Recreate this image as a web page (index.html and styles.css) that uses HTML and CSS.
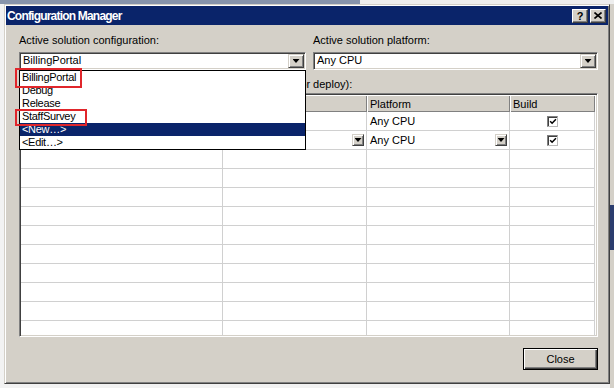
FILE: index.html
```html
<!DOCTYPE html>
<html lang="en">
<head>
<meta charset="utf-8">
<title>Configuration Manager</title>
<link rel="stylesheet" href="styles.css">
</head>
<body>
<div class="window">
  <div class="titlebar">
    <span class="title">Configuration Manager</span>
    <div class="tbtns">
      <span class="tbtn help">?</span>
      <span class="tbtn">
        <svg width="8" height="7" viewBox="0 0 8 7"><path d="M0.5 0.5 L7.5 6.5 M7.5 0.5 L0.5 6.5" stroke="#000" stroke-width="1.6" fill="none"/></svg>
      </span>
    </div>
  </div>
  <div class="client">
    <div class="selectors">
      <div class="sel">
        <div class="label">Active solution configuration:</div>
        <div class="combo-wrap">
          <div class="combo">
            <span class="value">BillingPortal</span>
            <span class="arrow-btn"><i class="tri"></i></span>
          </div>
          <ul class="dropdown">
            <li>BillingPortal</li>
            <li>Debug</li>
            <li>Release</li>
            <li>StaffSurvey</li>
            <li class="selected">&lt;New…&gt;</li>
            <li>&lt;Edit…&gt;</li>
          </ul>
          <span class="mark mark-1"></span>
          <span class="mark mark-2"></span>
        </div>
      </div>
      <div class="sel">
        <div class="label">Active solution platform:</div>
        <div class="combo-wrap">
          <div class="combo">
            <span class="value">Any CPU</span>
            <span class="arrow-btn"><i class="tri"></i></span>
          </div>
        </div>
      </div>
    </div>

    <div class="label contexts">Project contexts (check the project configurations to build or deploy):</div>

    <div class="grid">
      <div class="row hdr">
        <div class="cell"></div>
        <div class="cell"></div>
        <div class="cell">Platform</div>
        <div class="cell">Build</div>
      </div>
      <div class="row">
        <div class="cell"></div>
        <div class="cell"></div>
        <div class="cell">Any CPU</div>
        <div class="cell center"><span class="chk"><svg width="9" height="9" viewBox="0 0 9 9"><path d="M1.3 4.2 L3.5 6.4 L7.8 2" stroke="#000" stroke-width="1.7" fill="none"/></svg></span></div>
      </div>
      <div class="row">
        <div class="cell"></div>
        <div class="cell end"><span class="arrow-btn small"><i class="tri"></i></span></div>
        <div class="cell"><span class="grow">Any CPU</span><span class="arrow-btn small mr"><i class="tri"></i></span></div>
        <div class="cell center"><span class="chk"><svg width="9" height="9" viewBox="0 0 9 9"><path d="M1.3 4.2 L3.5 6.4 L7.8 2" stroke="#000" stroke-width="1.7" fill="none"/></svg></span></div>
      </div>
      <div class="row"><div class="cell"></div><div class="cell"></div><div class="cell"></div><div class="cell"></div></div>
      <div class="row"><div class="cell"></div><div class="cell"></div><div class="cell"></div><div class="cell"></div></div>
      <div class="row"><div class="cell"></div><div class="cell"></div><div class="cell"></div><div class="cell"></div></div>
      <div class="row"><div class="cell"></div><div class="cell"></div><div class="cell"></div><div class="cell"></div></div>
      <div class="row"><div class="cell"></div><div class="cell"></div><div class="cell"></div><div class="cell"></div></div>
      <div class="row"><div class="cell"></div><div class="cell"></div><div class="cell"></div><div class="cell"></div></div>
      <div class="row"><div class="cell"></div><div class="cell"></div><div class="cell"></div><div class="cell"></div></div>
      <div class="row"><div class="cell"></div><div class="cell"></div><div class="cell"></div><div class="cell"></div></div>
      <div class="row"><div class="cell"></div><div class="cell"></div><div class="cell"></div><div class="cell"></div></div>
      <div class="row"><div class="cell"></div><div class="cell"></div><div class="cell"></div><div class="cell"></div></div>
    </div>

    <div class="footer">
      <button class="btn" type="button">Close</button>
    </div>
  </div>
</div>
</body>
</html>
```

FILE: styles.css
```css
* { box-sizing: border-box; }

html, body { margin: 0; padding: 0; }

body {
  width: 614px;
  height: 388px;
  overflow: hidden;
  font-family: "Liberation Sans", Arial, sans-serif;
  font-size: 11px;
  color: #000;
  background:
    linear-gradient(#2b3d6e, #2b3d6e) 610px 205px / 4px 45px no-repeat,
    linear-gradient(to right, #8794ab 0 360px, #eeeeee 360px) 0 0 / 100% 4px no-repeat,
    linear-gradient(#d4d0c8, #d4d0c8) 610px 0 / 4px 388px no-repeat,
    #f2f2f2;
  padding: 4px 0 0 4px;
}

.window {
  width: 606px;
  height: 380px;
  background: #d4d0c8;
  border: 1px solid;
  border-color: #d4d0c8 #404040 #404040 #d4d0c8;
  box-shadow: inset 1px 1px #ffffff, inset -1px -1px #808080;
  padding: 1px;
}

.titlebar {
  height: 19px;
  background: #0a246a;
  color: #fff;
  display: flex;
  align-items: center;
  padding: 0 2px 0 1px;
}

.title {
  flex: 1;
  font-weight: bold;
  font-size: 12px;
  letter-spacing: -0.8px;
  white-space: nowrap;
}

.tbtns { display: flex; gap: 2px; }

.tbtn {
  width: 16px;
  height: 14px;
  background: #d4d0c8;
  border: 1px solid;
  border-color: #ffffff #404040 #404040 #ffffff;
  box-shadow: inset -1px -1px #808080;
  color: #000;
  display: flex;
  align-items: center;
  justify-content: center;
  font-weight: bold;
  font-size: 11px;
  line-height: 12px;
}

.client {
  height: 357px;
  padding: 9px 10px 0 13px;
  display: flex;
  flex-direction: column;
}

.selectors {
  display: grid;
  grid-template-columns: 287px 285px;
  column-gap: 7px;
}

.label {
  height: 13px;
  line-height: 13px;
  white-space: nowrap;
}

.combo-wrap {
  position: relative;
  margin-top: 5px;
}

.combo {
  height: 18px;
  background: #fff;
  border: 1px solid;
  border-color: #808080 #ffffff #ffffff #808080;
  box-shadow: inset 1px 1px #404040, inset -1px -1px #d4d0c8;
  padding: 1px;
  display: flex;
}

.value {
  flex: 1;
  padding-left: 2px;
  line-height: 13px;
  white-space: nowrap;
}

.arrow-btn {
  width: 16px;
  height: 14px;
  background: #d4d0c8;
  border: 1px solid;
  border-color: #d4d0c8 #404040 #404040 #d4d0c8;
  box-shadow: inset 1px 1px #ffffff, inset -1px -1px #808080;
  display: flex;
  align-items: center;
  justify-content: center;
  flex: none;
}

.arrow-btn.small { width: 12px; height: 12px; }
.arrow-btn.mr { margin-right: 2px; }

.tri {
  display: block;
  width: 7px;
  height: 4px;
  background: #000;
  clip-path: polygon(0 0, 100% 0, 50% 100%);
}

.dropdown {
  position: absolute;
  top: 100%;
  left: 0;
  width: 287px;
  margin: 0;
  padding: 0;
  list-style: none;
  background: #fff;
  border: 1px solid #000;
  z-index: 2;
}

.dropdown li {
  height: 13px;
  line-height: 13px;
  padding-left: 2px;
  white-space: nowrap;
  letter-spacing: -0.3px;
}

.dropdown li.selected {
  background: #0a246a;
  color: #fff;
}

.mark {
  position: absolute;
  border: 2px solid #e0262b;
  z-index: 3;
}

.mark-1 { left: -4px; top: 16px; width: 67px; height: 20px; }
.mark-2 { left: -4px; top: 57px; width: 72px; height: 17px; }

.contexts { margin-top: 8px; }

.grid {
  margin-top: 2px;
  height: 244px;
  border: 1px solid;
  border-color: #808080 #ffffff #ffffff #808080;
  box-shadow: inset 1px 1px #404040, inset -1px -1px #d4d0c8;
  padding: 1px;
  background: #fff;
  overflow: hidden;
}

.row {
  display: grid;
  grid-template-columns: 202px 144px 143px 85px;
}

.cell {
  height: 19px;
  border-right: 1px solid #d0d0d0;
  border-bottom: 1px solid #d0d0d0;
  display: flex;
  align-items: center;
  padding-left: 3px;
  white-space: nowrap;
}

.cell.end { justify-content: flex-end; padding-right: 2px; }
.cell.center { justify-content: center; padding-left: 0; }
.grow { flex: 1; }

.hdr .cell {
  height: 17px;
  border: none;
  background: #d4d0c8;
  box-shadow: inset 1px 1px #ffffff, inset -1px -1px #808080;
  padding-left: 3px;
  line-height: 16px;
}

.chk {
  width: 11px;
  height: 11px;
  border: 1px solid;
  border-color: #808080 #b8b8b8 #b8b8b8 #808080;
  box-shadow: inset 1px 1px #404040;
  background: #fff;
  display: flex;
  align-items: center;
  justify-content: center;
  margin-left: 1px;
}

.chk svg { display: block; margin: 1px 0 0 1px; }

.footer {
  margin-top: 11px;
  display: flex;
  justify-content: flex-end;
}

.btn {
  width: 75px;
  height: 22px;
  padding: 0;
  font-family: "Liberation Sans", Arial, sans-serif;
  font-size: 11px;
  color: #000;
  background: #d4d0c8;
  border: 1px solid #000;
  box-shadow: inset 1px 1px #ffffff, inset -1px -1px #404040, inset -2px -2px #808080;
}
```
